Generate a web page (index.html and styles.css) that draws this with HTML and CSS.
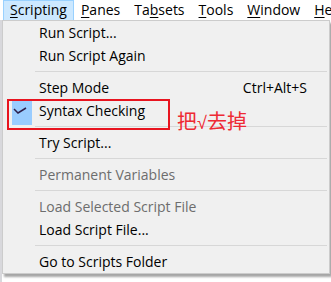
FILE: index.html
```html
<!DOCTYPE html>
<html lang="en">
<head>
  <meta charset="UTF-8">
  <title>Scripting menu</title>
  <link rel="stylesheet" href="styles.css">
</head>
<body>

<div class="menubar">
  <div class="top-item open"><u>S</u>cripting</div>
  <div class="top-item"><u>P</u>anes</div>
  <div class="top-item">Ta<u>b</u>sets</div>
  <div class="top-item"><u>T</u>ools</div>
  <div class="top-item"><u>W</u>indow</div>
  <div class="top-item"><u>H</u>elp</div>
</div>

<div class="stage">
  <div class="menu">
    <div class="item"><span class="icon"></span><span class="label">Run Script...</span></div>
    <div class="item"><span class="icon"></span><span class="label">Run Script Again</span></div>
    <div class="sep"></div>
    <div class="item"><span class="icon"></span><span class="label">Step Mode</span><span class="key">Ctrl+Alt+S</span></div>
    <div class="item"><span class="icon checked">
      <svg width="20" height="25" viewBox="0 0 20 25"><polyline points="2,9 6,13 14,8" fill="none" stroke="#2e1f4c" stroke-width="1.5"/></svg>
    </span><span class="label">Syntax Checking</span></div>
    <div class="sep"></div>
    <div class="item"><span class="icon"></span><span class="label">Try Script...</span></div>
    <div class="sep"></div>
    <div class="item disabled"><span class="icon"></span><span class="label">Permanent Variables</span></div>
    <div class="sep"></div>
    <div class="item disabled"><span class="icon"></span><span class="label">Load Selected Script File</span></div>
    <div class="item"><span class="icon"></span><span class="label">Load Script File...</span></div>
    <div class="sep"></div>
    <div class="item"><span class="icon"></span><span class="label">Go to Scripts Folder</span></div>
  </div>

  <!-- annotation drawn over the screenshot -->
  <div class="mark-box"></div>
  <div class="mark-note">把<span class="root">√</span>去掉</div>
</div>

</body>
</html>
```

FILE: styles.css
```css
body {
  margin: 0;
  background: #ffffff;
  font-family: 'Segoe UI', 'Open Sans', sans-serif;
  font-size: 14px;
  color: #000;
  overflow: hidden;
}

.menubar {
  display: flex;
  height: 20px;
  padding-left: 3px;
  background: #fff;
  white-space: nowrap;
}

.top-item {
  height: 20px;
  line-height: 18px;
  padding: 0 6px 0 6px;
  box-sizing: border-box;
  border: 1px solid transparent;
}

.top-item.open {
  background: #cce8ff;
  border-color: #99d1ff;
  border-bottom: none;
}

.top-item u {
  text-decoration-thickness: 1px;
  text-underline-offset: 2px;
}

.stage {
  position: relative;
  padding-left: 2px;
  background: linear-gradient(to right, #d8d8dc 0, #d8d8dc 2px, #fff 2px);
  height: 262px;
}

.menu {
  width: 328px;
  background: #f0f0f0;
  border: 1px solid #cccccc;
  padding: 0;
  box-sizing: border-box;
  box-shadow: 2px 3px 2px rgba(0, 0, 0, 0.35);
}

.item {
  display: flex;
  align-items: center;
  height: 23px;
}

.icon {
  width: 32px;
  height: 23px;
  margin-right: 4px;
  display: flex;
  align-items: flex-start;
  justify-content: flex-end;
}

.icon.checked svg {
  display: block;
  background: #99ccff;
  margin-right: 3px;
  margin-top: 1px;
  flex-shrink: 0;
}

.label {
  flex: 1;
}

.disabled {
  color: #6d6d6d;
}

.key {
  margin-right: 22px;
}

.sep {
  height: 1px;
  background: #d7d7d7;
  margin: 4px 2px 4px 32px;
}

.mark-box {
  position: absolute;
  left: 7px;
  top: 79px;
  width: 163px;
  height: 31px;
  box-sizing: border-box;
  border: 2px solid #e8141f;
}

.mark-note {
  position: absolute;
  left: 177px;
  top: 89px;
  font-family: 'Noto Sans CJK SC', sans-serif;
  font-size: 20px;
  color: #ee2a34;
  line-height: 24px;
}

.mark-note .root {
  font-family: 'Liberation Sans', sans-serif;
  font-size: 18px;
}
```
